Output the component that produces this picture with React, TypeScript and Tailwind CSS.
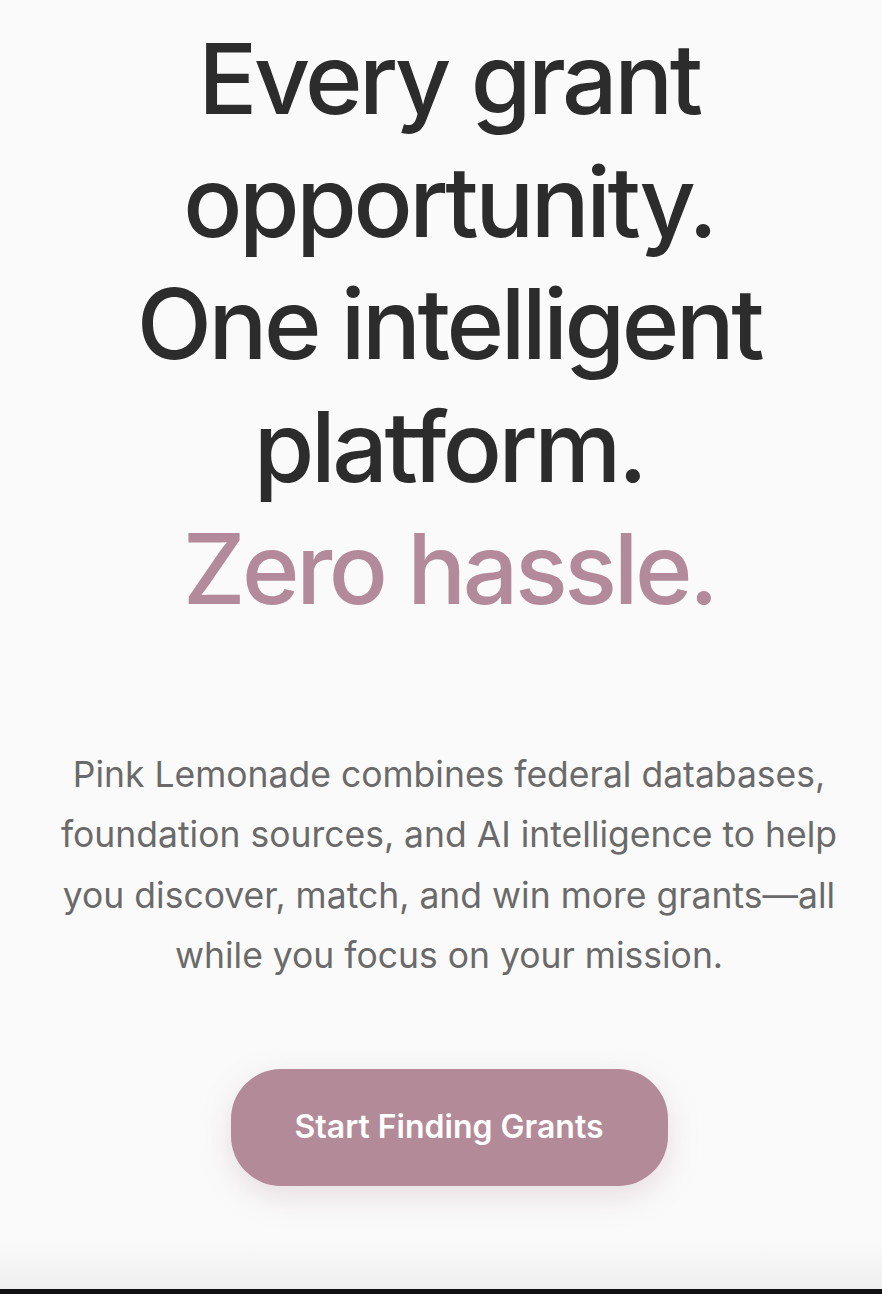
export default function App() {
  return (
    <div className="min-h-[1294px] bg-[#fafafa] flex flex-col font-['Inter',sans-serif]">
      <section className="flex flex-col items-center text-center pl-[40px] pr-[24px] pt-[18px]">
        <h1 className="text-[98px] leading-[1.25] font-medium tracking-[-0.035em] text-[#2c2c2c]">
          Every grant
          <br />
          opportunity.
          <br />
          One intelligent
          <br />
          platform.
          <br />
          <span className="text-[#b38a99]">Zero hassle.</span>
        </h1>

        <p className="mt-[114px] max-w-[800px] text-[35.5px] leading-[60.5px] text-[#6a6a6a]">
          Pink Lemonade combines federal databases, foundation sources, and AI intelligence to help you
          discover, match, and win more grants—all while you focus on your mission.
        </p>

        <button className="mt-[82px] w-[437px] h-[117px] rounded-[50px] bg-[#b28a98] text-white text-[32px] font-semibold shadow-[0_10px_30px_rgba(178,138,152,0.25)]">
          Start Finding Grants
        </button>
      </section>

      <div className="flex-1 min-h-[40px]" />
      <div className="h-[50px] bg-gradient-to-b from-[#fafafa] to-[#efefef]" />
      <div className="h-[5px] bg-[#111114]" />
    </div>
  )
}
